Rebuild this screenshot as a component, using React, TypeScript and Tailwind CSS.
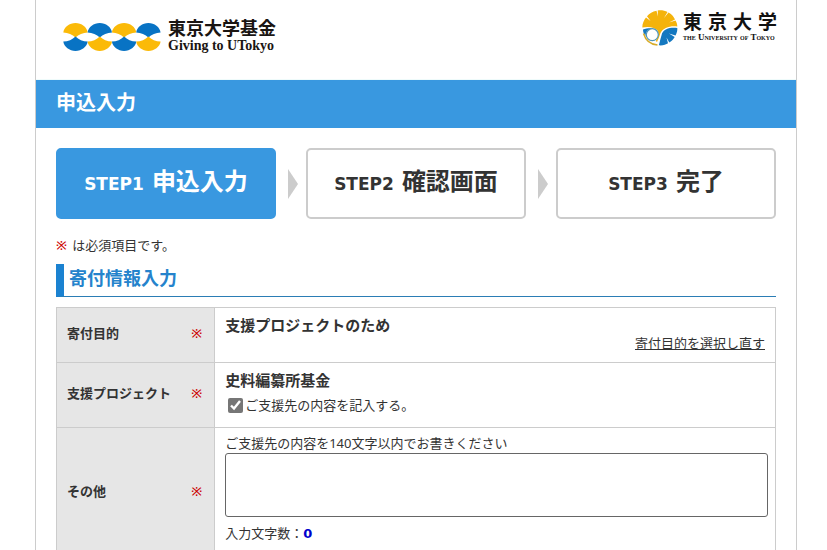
import { useState, type ReactNode } from "react";

const steps = [
  { no: "STEP1", label: "申込入力", active: true },
  { no: "STEP2", label: "確認画面", active: false },
  { no: "STEP3", label: "完了", active: false },
];

function Fan({ x, y, color, flip }: { x: number; y: number; color: string; flip?: boolean }) {
  // A fan: outer arc whose lower edges slope in to a point
  return (
    <path
      transform={`translate(${x} ${y}) scale(1 ${flip ? -1 : 1})`}
      d="M-12.2 -4.6C-11.5 -10 -6 -14 0 -14C6 -14 11.5 -10 12.2 -4.6C7.5 -4.6 3 -2.5 0 0.500C-3 -2.5 -7.5 -4.6 -12.2 -4.6Z"
      fill={color}
    />
  );
}

function FundLogo() {
  const blue = "#0873c4";
  const gold = "#fbba08";
  return (
    <a href="#fund" className="flex items-start gap-[7px] text-[#1a1512]">
      <svg className="mt-[3px] h-7 w-[98px]" viewBox="0 0 98 28" aria-hidden="true">
        {[0, 1, 2, 3].map((i) => (
          <g key={i}>
            <Fan x={12.5 + i * 24.3} y={14} color={i % 2 ? blue : gold} />
            <Fan x={12.5 + i * 24.3} y={14} color={i % 2 ? gold : blue} flip />
          </g>
        ))}
      </svg>
      <span className="flex flex-col gap-px">
        <span className="font-['Liberation_Serif','Noto_Sans_CJK_JP',serif] text-lg leading-[18px] font-bold">
          東京大学基金
        </span>
        <span className="font-['Liberation_Serif',serif] text-[14px] leading-[14px] font-bold">
          Giving to UTokyo
        </span>
      </span>
    </a>
  );
}

function UniversityLogo() {
  return (
    <a href="#university" className="flex items-start gap-[5px] text-[#111]">
      <svg className="h-[36px] w-[36px]" viewBox="0 0 36 36" aria-hidden="true">
        <path
          d="M16 21C13 17.500 7 16 0.300 17.500C0.300 13.500 2 10 4 7.500L8.500 11L5 6.300C7.500 3.500 10.500 1.700 14.500 0.800L16 6.500L15.700 0.500C19 0 23 0.600 25.500 2L22 8L26.500 2.500C30 4.500 32 7 33 9.500L27 12.500L33.500 10.500C34.800 12.500 35.300 14.500 35.300 16.500C28 15.500 21 18 18.500 23C17.500 26 16.500 29 15 32L13.800 31C15.500 28 16.800 24.500 16 21Z"
          fill="#f4b30c"
        />
        <path
          d="M35.300 18C28 17 22 19 20 23.500C19 27 18 31 16.800 35.300C21 35.700 24 34.500 26 33.300L24.500 27.500L27.300 32.500C30 31 31.500 29 32.700 27L27 23.500L33.500 25.500C35 23 35.500 20 35.300 18Z"
          fill="#1478c0"
        />
        <path d="M1 19.500C4 18.500 8 18 11 18.500C6 19 3.500 22 3.500 26C1.800 24 1 22 1 19.500Z" fill="#1478c0" />
        <circle cx="10.300" cy="24.700" r="6" fill="#fff" stroke="#4e94b8" strokeWidth="1.200" />
        <path d="M1.500 23.500C3.500 30 8.500 34.500 15.500 35" fill="none" stroke="#d7ab28" strokeWidth="1.500" />
      </svg>
      <span className="flex w-[94px] flex-col pt-[3px]">
        <span className="font-['Liberation_Serif','Noto_Sans_CJK_JP',serif] text-[19px] leading-[20px] font-bold [text-align-last:justify]">
          東京大学
        </span>
        <span className="font-['Liberation_Serif',serif] text-[9px] leading-[9px] font-bold whitespace-nowrap [font-variant:small-caps]">
          the University of Tokyo
        </span>
      </span>
    </a>
  );
}

function Row({ label, htmlFor, children }: { label: string; htmlFor?: string; children: ReactNode }) {
  return (
    <tr>
      <th scope="row" className="border border-[#ccc] bg-[#e6e6e6] pr-3 pb-1 pl-[10px] text-left align-middle">
        <span className="flex items-center justify-between">
          {htmlFor ? <label htmlFor={htmlFor}>{label}</label> : <span>{label}</span>}
          <span className="font-medium text-[#c00]">※</span>
        </span>
      </th>
      <td className="border border-[#ccc] px-[10px] pt-[5px] pb-[9px] align-top">{children}</td>
    </tr>
  );
}

export default function App() {
  const [text, setText] = useState("");
  const [checked, setChecked] = useState(true);

  return (
    <div className="min-h-screen bg-white pl-[5px] font-['Noto_Sans','Noto_Sans_CJK_JP',sans-serif] text-[13px] leading-5 text-[#333]">
      <div className="mx-auto max-w-[762px] border-x border-[#ccc] bg-white">
        <header className="flex h-20 items-start justify-between border-b border-[#effbfb] pr-[19px] pl-[27px]">
          <div className="pt-5">
            <FundLogo />
          </div>
          <div className="pt-[10px]">
            <UniversityLogo />
          </div>
        </header>
        <h1 className="bg-[#3998e0] px-5 pt-[9px] pb-[11px] text-xl leading-7 font-bold text-white">申込入力</h1>
        <main className="px-5 pt-5">
          <ol className="flex">
            {steps.map((s, i) => (
              <li key={s.no} className={i ? "flex flex-[250] items-center" : "flex flex-[220] items-center"}>
                {i > 0 && (
                  <svg className="mr-2 ml-3 h-[30px] w-[10px] shrink-0" viewBox="0 0 10 30" aria-hidden="true">
                    <path d="M0 0L10 15L0 30Z" fill="#ccc" />
                  </svg>
                )}
                <div
                  className={
                    s.active
                      ? "flex h-[71px] flex-1 items-baseline justify-center gap-2 rounded-[5px] border-2 border-[#3998e0] bg-[#3998e0] pt-[13px] font-bold text-white"
                      : "flex h-[71px] flex-1 items-baseline justify-center gap-2 rounded-[5px] border-2 border-[#ccc] bg-white pt-[13px] font-bold"
                  }
                >
                  <span className="font-['DejaVu_Sans',sans-serif] text-[17px] leading-9">{s.no}</span>
                  <span className="text-2xl leading-9">{s.label}</span>
                </div>
              </li>
            ))}
          </ol>
          <p className="mt-4">
            <span className="mr-0.5 font-medium text-[#c00]">※</span> は必須項目です。
          </p>
          <h2 className="mt-[9px] border-b border-l-8 border-b-[#2b7db5] border-l-[#1b82d1] pb-1 pl-[5px] text-lg leading-7 font-bold text-[#2583cc]">
            寄付情報入力
          </h2>
          <form>
            <table className="mt-[10px] w-full table-fixed border-collapse">
              <colgroup>
                <col className="w-[22%]" />
                <col />
              </colgroup>
              <tbody>
                <Row label="寄付目的">
                  <p className="text-[15px] leading-6 font-bold">支援プロジェクトのため</p>
                  <p className="-mt-1 text-right">
                    <a href="#purpose" className="underline">
                      寄付目的を選択し直す
                    </a>
                  </p>
                </Row>
                <Row label="支援プロジェクト">
                  <p className="text-[15px] leading-6 font-bold">史料編纂所基金</p>
                  <label className="flex h-[26px] items-center gap-[2px] pl-[3px]">
                    <input
                      type="checkbox"
                      checked={checked}
                      onChange={(e) => setChecked(e.target.checked)}
                      className="h-[15px] w-[15px] accent-[#767676]"
                    />
                    ご支援先の内容を記入する。
                  </label>
                </Row>
                <Row label="その他" htmlFor="other">
                  <p>ご支援先の内容を140文字以内でお書きください</p>
                  <textarea
                    id="other"
                    value={text}
                    onChange={(e) => setText(e.target.value)}
                    className="-mr-[3px] block h-16 w-[calc(100%+3px)] resize-none rounded-[3px] border border-[#666] bg-white p-1"
                  />
                  <p className="mt-[6px] mb-1">
                    入力文字数：<strong className="font-['DejaVu_Sans',sans-serif] text-[#0000cc]">{text.length}</strong>
                  </p>
                </Row>
              </tbody>
            </table>
          </form>
        </main>
      </div>
    </div>
  );
}
